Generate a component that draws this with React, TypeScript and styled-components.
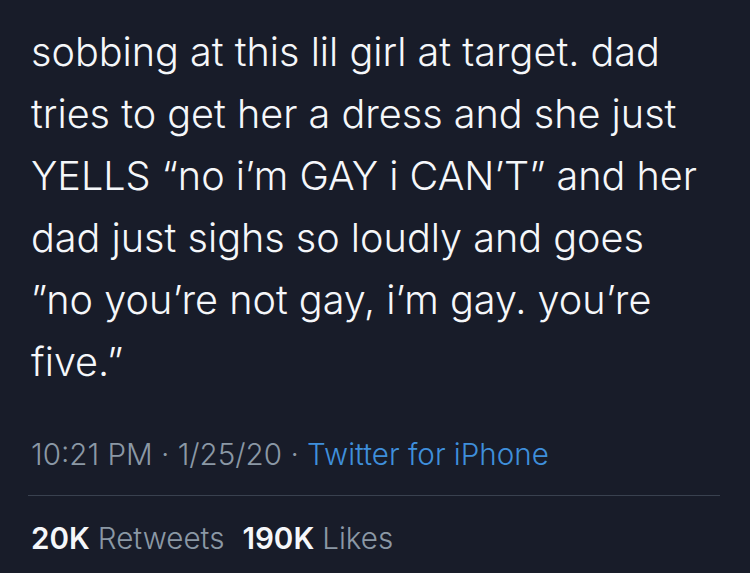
import React from "react";
import styled, { createGlobalStyle } from "styled-components";

const GlobalStyle = createGlobalStyle`
  html, body {
    margin: 0;
    padding: 0;
    background: #181c29;
  }
  body {
    font-family: Inter, Roboto, "Liberation Sans", sans-serif;
  }
`;

const Card = styled.div`
  width: 750px;
  height: 573px;
  box-sizing: border-box;
  background: #181c29;
  padding: 21px 30px 0 31px;
  overflow: hidden;
`;

const Body = styled.p`
  margin: 0;
  color: #f5f7fa;
  font-size: 39.6px;
  line-height: 62px;
  font-weight: 300;
  white-space: nowrap;
`;

const Meta = styled.div`
  margin-top: 43px;
  font-size: 29.6px;
  line-height: 36px;
  font-weight: 300;
  color: #8b98a5;
`;

const Source = styled.span`
  color: #3f8fdb;
`;

const Divider = styled.hr`
  margin: 23px 0 0 -3px;
  border: none;
  height: 1px;
  background: #39414f;
`;

const Stats = styled.div`
  display: flex;
  gap: 18px;
  margin-top: 24px;
  font-size: 29.6px;
  line-height: 36px;
  font-weight: 300;
  color: #8b98a5;
`;

const Count = styled.b`
  color: #f5f7fa;
  font-weight: 600;
  margin-right: 8px;
`;

const lines = [
  "sobbing at this lil girl at target. dad",
  "tries to get her a dress and she just",
  "YELLS \u201cno i\u2019m GAY i CAN\u2019T\u201d and her",
  "dad just sighs so loudly and goes",
  "\u201dno you\u2019re not gay, i\u2019m gay. you\u2019re",
  "five.\u201d",
];

export default function App() {
  return (
    <Card>
      <GlobalStyle />
      <Body>
        {lines.map((l, i) => (
          <React.Fragment key={i}>
            {l}
            {i < lines.length - 1 && <br />}
          </React.Fragment>
        ))}
      </Body>
      <Meta>
        10:21 PM · 1/25/20 · <Source>Twitter for iPhone</Source>
      </Meta>
      <Divider />
      <Stats>
        <span>
          <Count>20K</Count>Retweets
        </span>
        <span>
          <Count>190K</Count>Likes
        </span>
      </Stats>
    </Card>
  );
}
